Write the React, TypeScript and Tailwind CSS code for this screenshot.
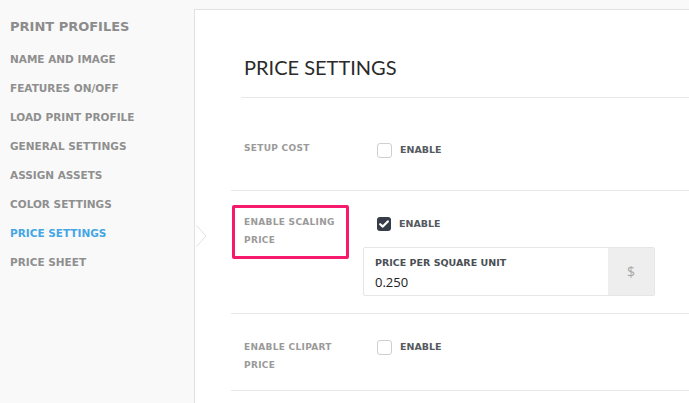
import { ReactNode } from "react";

const nav = [
  "NAME AND IMAGE",
  "FEATURES ON/OFF",
  "LOAD PRINT PROFILE",
  "GENERAL SETTINGS",
  "ASSIGN ASSETS",
  "COLOR SETTINGS",
  "PRICE SETTINGS",
  "PRICE SHEET",
];

const sans = "font-['DejaVu_Sans',sans-serif]";

function Checkbox({ checked }: { checked?: boolean }) {
  if (checked) {
    return (
      <span className="flex h-[14px] w-[14px] items-center justify-center rounded-[3px] bg-[#363c48]">
        <svg width="10" height="8" viewBox="0 0 10 8">
          <path d="M1.2 4.2 L3.8 6.6 L8.8 1.4" fill="none" stroke="#fff" strokeWidth="2.2" strokeLinecap="round" strokeLinejoin="round" />
        </svg>
      </span>
    );
  }
  return <span className="h-[15px] w-[15px] rounded-[3px] border border-[#cfcfcf] bg-white" />;
}

function Enable({ checked }: { checked?: boolean }) {
  return (
    <div className="flex h-[14px] items-center gap-[8px]">
      <Checkbox checked={checked} />
      <span className={`${sans} text-[9.5px] font-bold text-[#555a60]`}>ENABLE</span>
    </div>
  );
}

function Label({ children }: { children: ReactNode }) {
  return (
    <div className={`${sans} text-[9px] font-bold leading-[18px] tracking-[0.3px] text-[#9a9a9a]`}>
      {children}
    </div>
  );
}

export default function App() {
  return (
    <div className="flex h-[403px] w-[689px] overflow-hidden bg-[#f9f9f9]">
      <aside className={`${sans} w-[194px] shrink-0 pl-[10px] pt-[18px]`}>
        <div className="h-[18px] text-[13px] font-bold leading-[18px] tracking-[0px] text-[#8c8c8c]">
          PRINT PROFILES
        </div>
        <ul className="mt-[9px]">
          {nav.map((item) => (
            <li
              key={item}
              className={`flex h-[29px] items-center text-[10.5px] font-bold ${
                item === "PRICE SETTINGS" ? "text-[#44a6e6]" : "text-[#8f8f8f]"
              }`}
            >
              {item}
            </li>
          ))}
        </ul>
      </aside>

      <main className="relative mt-[9px] flex-1 border-l border-t border-[#e2e2e2] bg-white">
        <svg className="absolute left-[1px] top-[215px]" width="11" height="22" viewBox="0 0 11 22">
          <path d="M0.5 0.5 L10 11 L0.5 21.5" fill="#fff" stroke="#e0e0e0" strokeWidth="1" />
        </svg>

        <div className="ml-[46px] h-[88px] border-b border-[#e8e8e8] pl-[3px] pt-[45px]">
          <h1 className="font-['Lato',sans-serif] text-[20px] font-normal leading-[24px] text-[#2a2a2a]">
            PRICE SETTINGS
          </h1>
        </div>

        <div className="ml-[36px]">
          <div className="flex h-[93px] border-b border-[#e8e8e8]">
            <div className="w-[146px] shrink-0 pl-[13px] pt-[41px]">
              <Label>SETUP COST</Label>
            </div>
            <div className="pt-[45px]">
              <Enable />
            </div>
          </div>

          <div className="flex h-[123px] border-b border-[#e8e8e8]">
            <div className="w-[132px] shrink-0">
              <div className="ml-[1px] mt-[14px] h-[54px] w-[117px] rounded-[2px] border-[3px] border-[#f7196b] pl-[9px] pt-[5px]">
                <Label>
                  ENABLE SCALING
                  <br />
                  PRICE
                </Label>
              </div>
            </div>
            <div className="pt-[26px]">
              <div className="ml-[14px]">
                <Enable checked />
              </div>
              <div className="mt-[16px] flex h-[49px] w-[292px] rounded-[2px] border border-[#e6e6e6]">
                <div className="flex-1 pl-[11px] pt-[8px]">
                  <div className={`${sans} text-[9.5px] font-bold leading-[14px] text-[#4a4f55]`}>
                    PRICE PER SQUARE UNIT
                  </div>
                  <div className="mt-[4px] font-['Open_Sans',sans-serif] text-[13px] leading-[16px] text-[#222]">
                    0.250
                  </div>
                </div>
                <div className="flex w-[46px] items-center justify-center bg-[#eeeeee] font-['Open_Sans',sans-serif] text-[14px] text-[#a8a8a8]">
                  $
                </div>
              </div>
            </div>
          </div>

          <div className="flex h-[77px] border-b border-[#e8e8e8]">
            <div className="w-[146px] shrink-0 pl-[13px] pt-[24px]">
              <Label>
                ENABLE CLIPART
                <br />
                PRICE
              </Label>
            </div>
            <div className="pt-[26px]">
              <Enable />
            </div>
          </div>
        </div>
      </main>
    </div>
  );
}
